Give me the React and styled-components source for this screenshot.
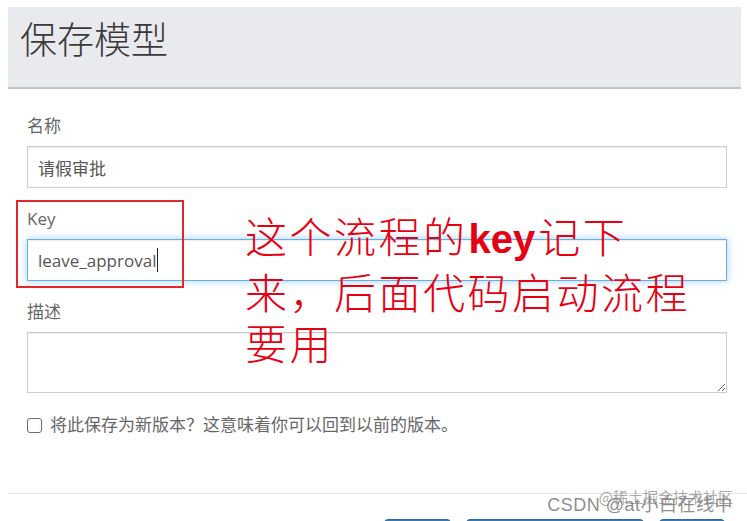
import React from 'react';
import styled, { createGlobalStyle } from 'styled-components';

const GlobalStyle = createGlobalStyle`
	html, body {
		margin: 0;
		padding: 0;
		overflow: hidden;
		background: #fff;
	}
	body {
		font-family: 'Open Sans', 'Noto Sans CJK SC', sans-serif;
	}
`;

const fields = [
	{ label: '名称', value: '请假审批' },
	{ label: 'Key', value: 'leave_approval', focused: true },
];

function App() {
	return (
		<Page>
			<GlobalStyle />
			<Modal>
				<Header>
					<Title>保存模型</Title>
				</Header>
				<Body>
					{fields.map((f) => (
						<Group key={f.label}>
							<Label>{f.label}</Label>
							{f.focused ? (
								<FakeInput $focused>
									{f.value}
									<Caret />
								</FakeInput>
							) : (
								<FakeInput>{f.value}</FakeInput>
							)}
						</Group>
					))}
					<Group>
						<Label>描述</Label>
						<TextArea />
					</Group>
					<CheckRow>
						<CheckBox type="checkbox" />
						<span>将此保存为新版本？这意味着你可以回到以前的版本。</span>
					</CheckRow>
				</Body>
				<Footer>
					<Button $w={67}>取消</Button>
					<Button $w={178}>保存并关闭编辑器</Button>
					<Button $w={66}>保存</Button>
				</Footer>
			</Modal>

			{/* annotation drawn over the screenshot */}
			<Highlight />
			<Note>
				这个流程的<NoteKey>key</NoteKey>记下
				<br />
				来，后面代码启动流程
				<br />
				要用
			</Note>

			<MarkTop>@稀土掘金技术社区</MarkTop>
			<MarkBottom>CSDN @at小白在线中</MarkBottom>
		</Page>
	);
}

export default App;

const Page = styled.div`
	position: relative;
	width: 747px;
	height: 521px;
	overflow: hidden;
`;

const Modal = styled.div`
	padding: 7px 0 0 8px;
`;

const Header = styled.div`
	height: 69px;
	margin-right: 6px;
	padding: 11px 12px 0;
	background: #e9eaed;
	border-bottom: 2px solid #c4c4c4;
`;

const Title = styled.h1`
	margin: 0;
	font-family: 'Noto Sans CJK SC', sans-serif;
	font-size: 37px;
	line-height: 40px;
	font-weight: 300;
	color: #3a3a3a;
`;

const Body = styled.div`
	padding: 27px 20px 0 19px;
`;

const Group = styled.div`
	& + & {
		margin-top: 21px;
	}
`;

const Label = styled.div`
	font-size: 17px;
	line-height: 20px;
	color: #666;
	margin-bottom: 10px;
`;

const FakeInput = styled.div`
	height: 42px;
	box-sizing: border-box;
	padding: 0 10px;
	display: flex;
	align-items: center;
	font-size: 17px;
	color: #555;
	background: #fff;
	border: 1px solid ${(p) => (p.$focused ? '#66afe9' : '#ccc')};
	box-shadow: ${(p) =>
		p.$focused
			? 'inset 0 1px 1px rgba(0,0,0,.075), 0 0 8px rgba(102,175,233,.6)'
			: 'inset 0 1px 1px rgba(0,0,0,.075)'};
`;

const Caret = styled.span`
	display: inline-block;
	width: 1px;
	height: 24px;
	margin-left: 1px;
	background: #222;
`;

const TextArea = styled.textarea`
	display: block;
	width: 100%;
	height: 61px;
	box-sizing: border-box;
	border: 1px solid #ccc;
	border-radius: 0;
	font-family: inherit;
	font-size: 17px;
	resize: vertical;
	outline: none;
	box-shadow: inset 0 1px 1px rgba(0, 0, 0, 0.075);
`;

const CheckRow = styled.label`
	display: flex;
	align-items: center;
	gap: 8px;
	margin-top: 22px;
	font-size: 17px;
	line-height: 20px;
	color: #666;
`;

const CheckBox = styled.input`
	appearance: none;
	margin: 0;
	width: 15px;
	height: 15px;
	border: 1px solid #6b6b6b;
	border-radius: 3px;
	background: #fff;
`;

const Footer = styled.div`
	margin-top: 58px;
	border-top: 1px solid #e5e5e5;
	padding: 25px 22px 20px 0;
	display: flex;
	justify-content: flex-end;
	gap: 15px;
`;

const Button = styled.button`
	width: ${(p) => p.$w}px;
	height: 34px;
	padding: 0;
	border: 1px solid #2e6da4;
	border-radius: 4px;
	background: #337ab7;
	color: #fff;
	font-family: 'Noto Sans CJK SC', sans-serif;
	font-size: 15px;
`;

const Highlight = styled.div`
	position: absolute;
	left: 16px;
	top: 200px;
	width: 168px;
	height: 88px;
	box-sizing: border-box;
	border: 2px solid #e3262b;
`;

const Note = styled.div`
	position: absolute;
	left: 245px;
	top: 209px;
	font-family: 'Noto Sans CJK SC', serif;
	font-size: 42px;
	font-weight: 300;
	line-height: 51px;
	letter-spacing: 2.5px;
	color: #e60012;
	white-space: nowrap;
`;

const NoteKey = styled.span`
	font-family: 'Liberation Sans', sans-serif;
	font-weight: 700;
	font-size: 40px;
	letter-spacing: 0;
	margin: 0 3px 0 1px;
`;

const MarkTop = styled.div`
	position: absolute;
	right: 14px;
	top: 488px;
	font-family: 'Noto Sans CJK SC', sans-serif;
	font-size: 15px;
	line-height: 18px;
	color: rgba(140, 140, 140, 0.75);
`;

const MarkBottom = styled.div`
	position: absolute;
	right: 14px;
	top: 494px;
	font-family: 'Liberation Sans', 'Noto Sans CJK SC', sans-serif;
	font-size: 18px;
	line-height: 22px;
	letter-spacing: 0.5px;
	color: rgba(120, 120, 120, 0.85);
`;
